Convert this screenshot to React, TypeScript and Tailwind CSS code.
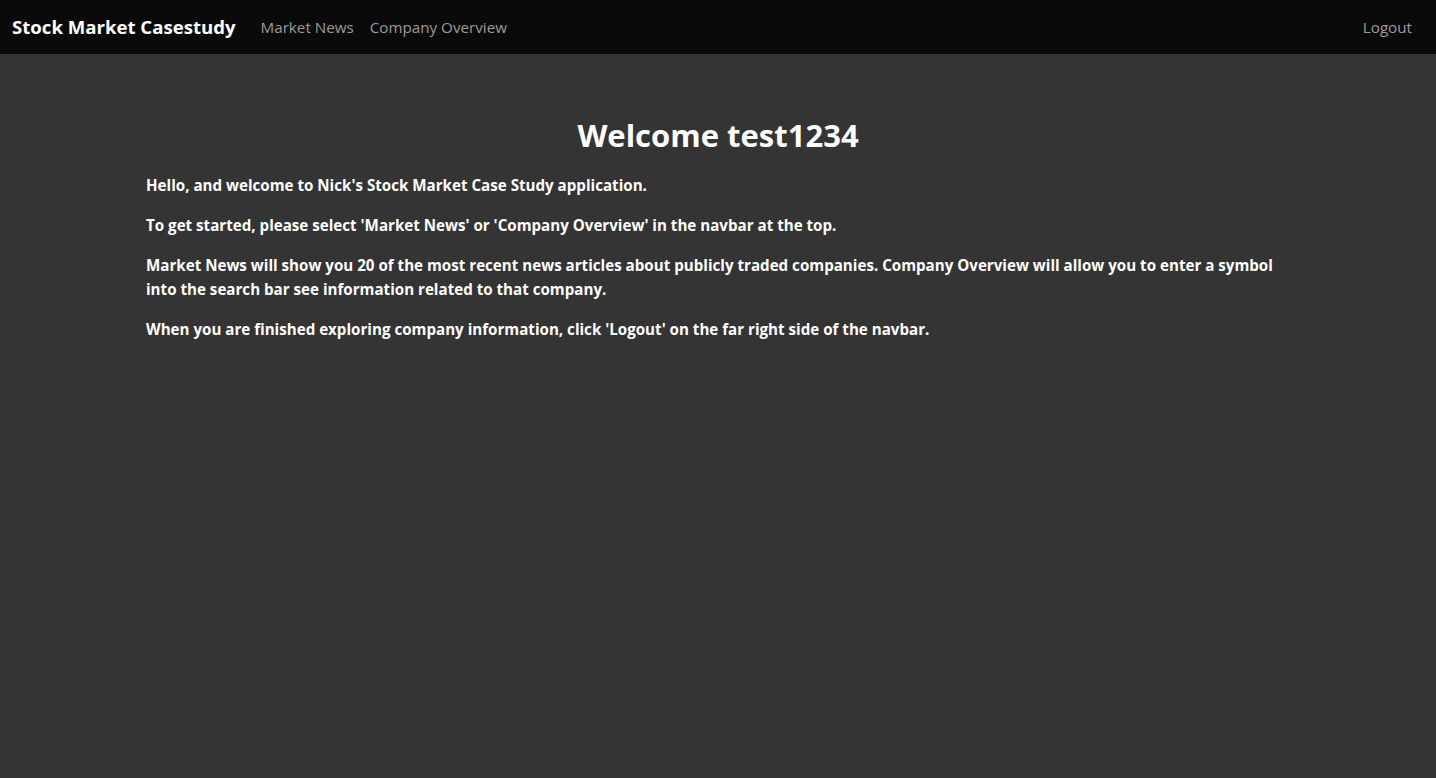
import React from "react";

export default function App() {
  return (
    <div className="min-h-[778px] bg-[#343434]" style={{ fontFamily: '"Open Sans", "Noto Sans", sans-serif' }}>
      <nav className="flex h-[54px] items-center bg-[#0a0a0a] pl-3 pr-6">
        <span className="text-[18.6px] font-bold text-white">Stock Market Casestudy</span>
        <div className="ml-[25px] flex gap-4 text-[15.2px] text-[#9b9b9b]">
          <span>Market News</span>
          <span>Company Overview</span>
        </div>
        <span className="ml-auto text-[15.2px] text-[#9b9b9b]">Logout</span>
      </nav>
      <main className="mx-auto w-[1144px] pt-[62px] text-white">
        <h1 className="mb-[19px] text-center text-[31px] font-bold leading-[38px]">Welcome test1234</h1>
        <p className="mb-4 text-[15.15px] font-bold leading-6">Hello, and welcome to Nick's Stock Market Case Study application.</p>
        <p className="mb-4 text-[15.15px] font-bold leading-6">To get started, please select 'Market News' or 'Company Overview' in the navbar at the top.</p>
        <p className="mb-4 text-[15.15px] font-bold leading-6">
          Market News will show you 20 of the most recent news articles about publicly traded companies. Company Overview will allow you to enter a symbol into the search bar see information related to that company.
        </p>
        <p className="mb-4 text-[15.15px] font-bold leading-6">When you are finished exploring company information, click 'Logout' on the far right side of the navbar.</p>
      </main>
    </div>
  );
}
